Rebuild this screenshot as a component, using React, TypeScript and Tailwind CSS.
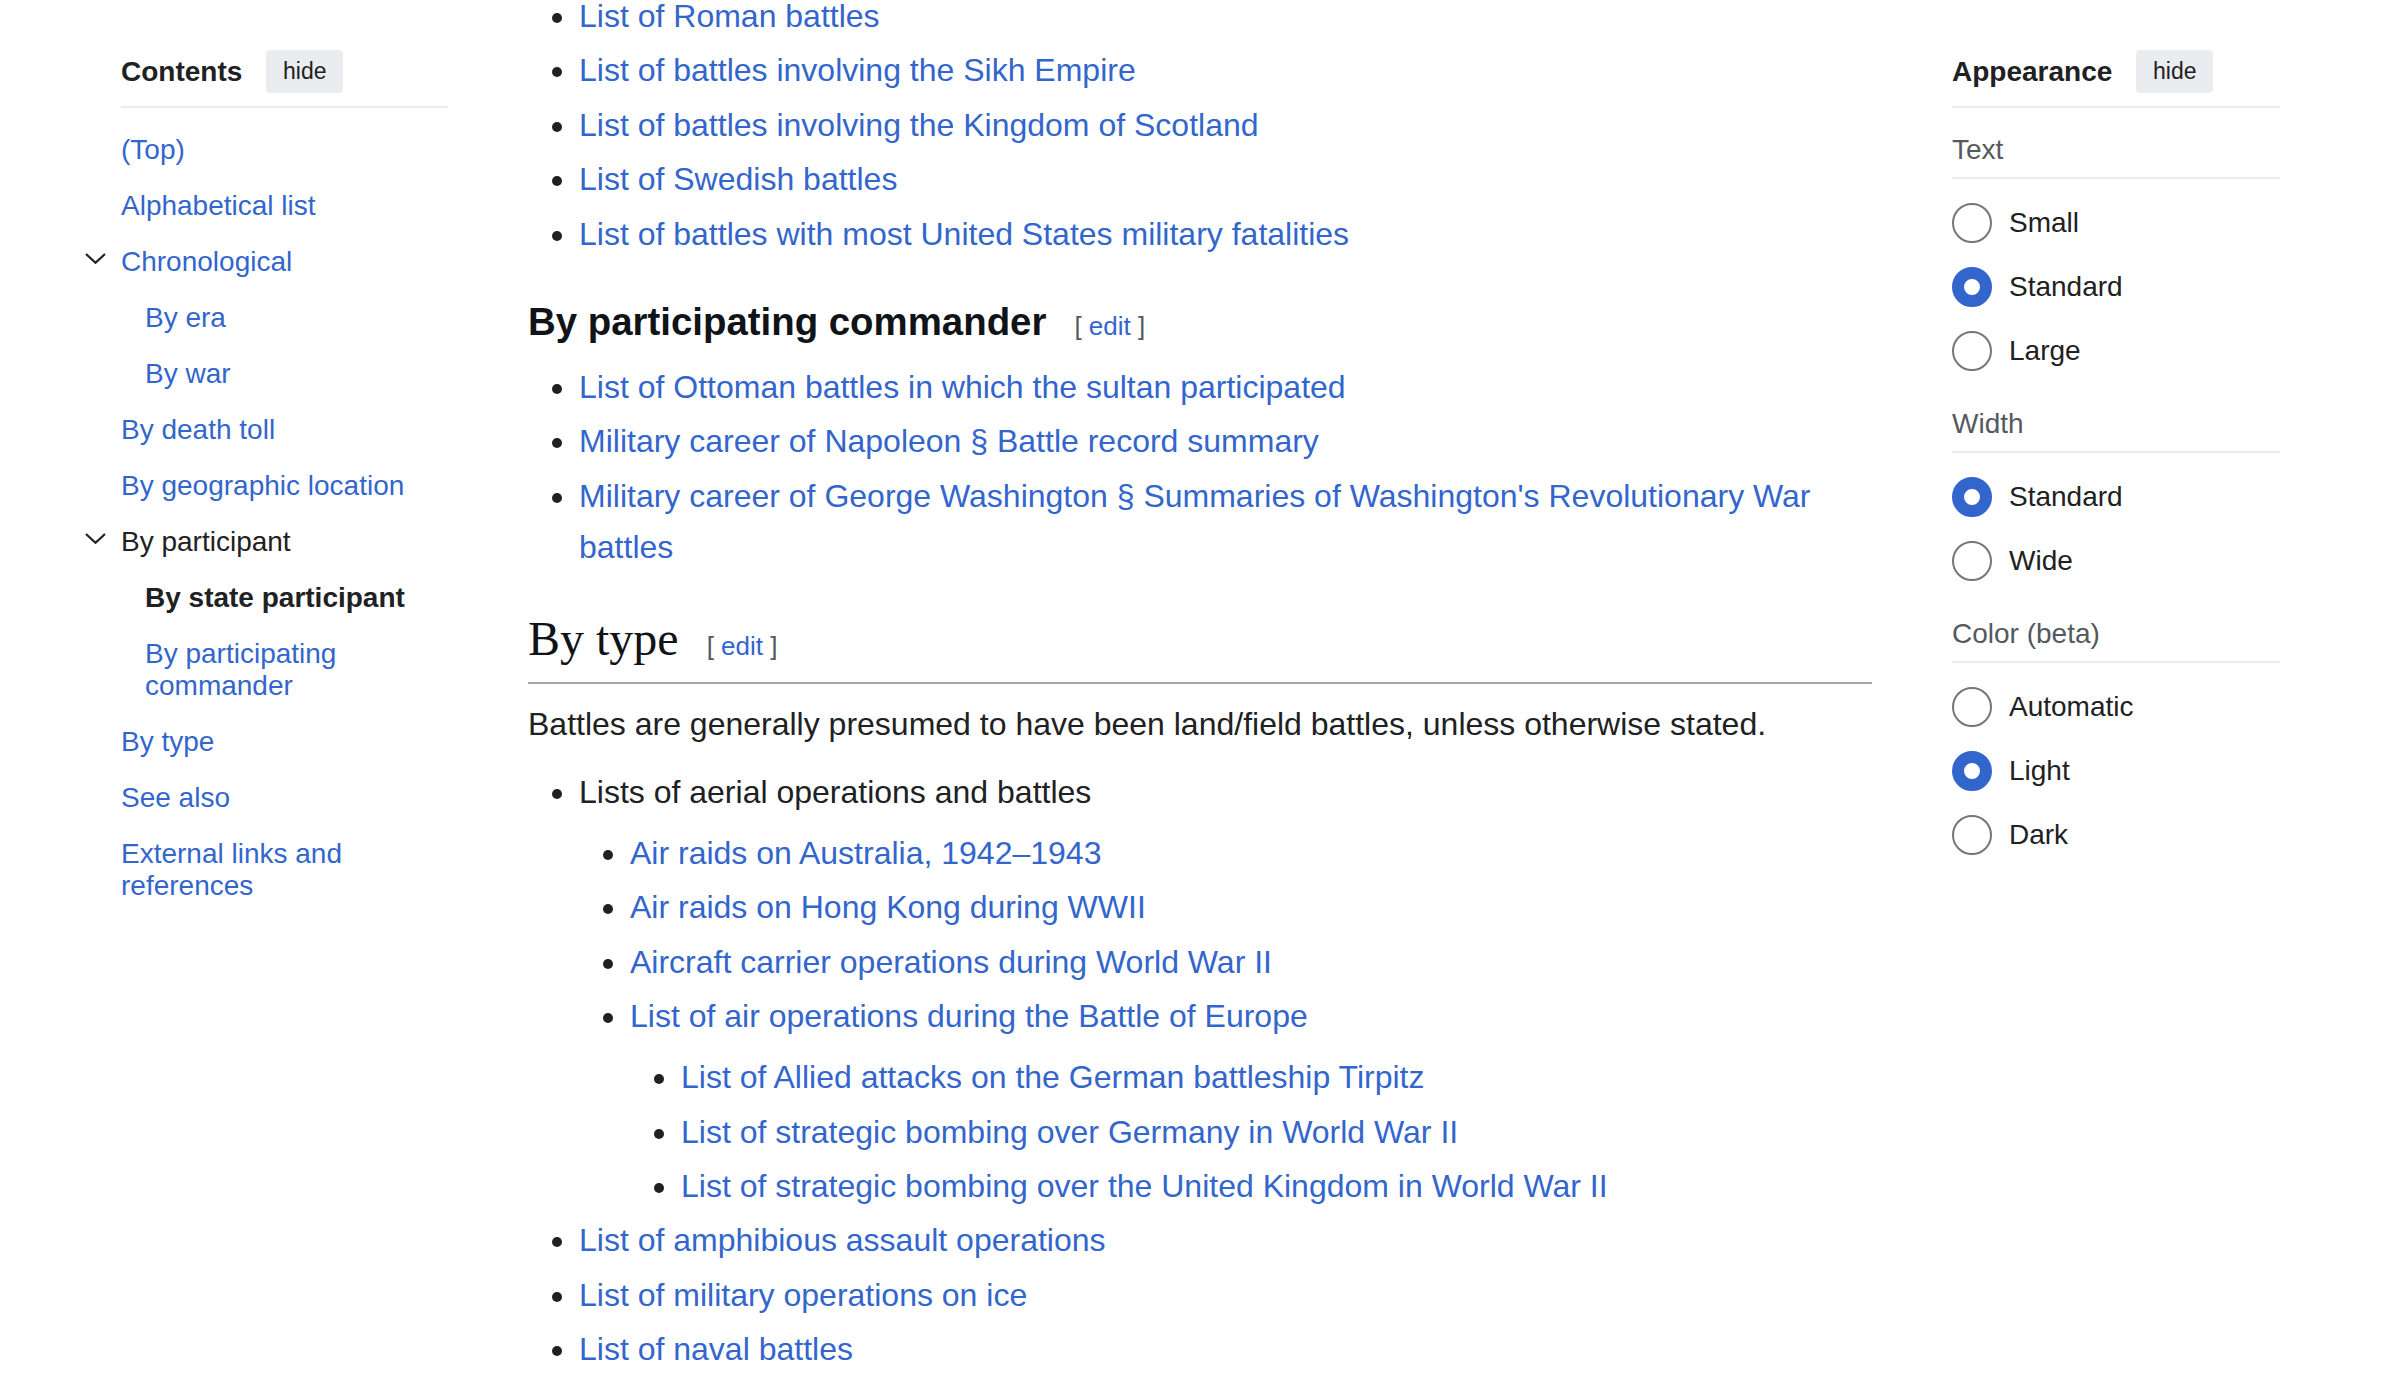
import React from "react";

const Dot = () => (
  <span className="w-[27px] shrink-0 pt-[22px]">
    <span className="block w-[10px] h-[10px] rounded-full bg-[#202122]" />
  </span>
);

function LI({ children, nested }: { children: React.ReactNode; nested?: React.ReactNode }) {
  return (
    <li className="flex -ml-[27px]">
      <Dot />
      <div className="min-w-0 flex-1">
        <div>{children}</div>
        {nested}
      </div>
    </li>
  );
}

function UL({ children, className = "" }: { children: React.ReactNode; className?: string }) {
  return <ul className={"flex flex-col gap-[3.2px] pl-[51px] " + className}>{children}</ul>;
}

const A = ({ children }: { children: React.ReactNode }) => (
  <a className="text-[#3366cc]" href="#">
    {children}
  </a>
);

const Edit = () => (
  <span className="ml-[28px] font-['Liberation_Sans',Arial,sans-serif] text-[26px] leading-none font-normal text-[#54595d]">
    [ <a className="text-[#3366cc]" href="#">edit</a> ]
  </span>
);

function Chevron() {
  return (
    <svg width="21" height="11" viewBox="0 0 21 11" className="mt-[7px]" fill="none">
      <path d="M1 1 L10.5 9.8 L20 1" stroke="#202122" strokeWidth="2.2" />
    </svg>
  );
}

type TocItem = { label: string; level: 1 | 2; link?: boolean; bold?: boolean; chevron?: boolean };

const toc: TocItem[] = [
  { label: "(Top)", level: 1, link: true },
  { label: "Alphabetical list", level: 1, link: true },
  { label: "Chronological", level: 1, link: true, chevron: true },
  { label: "By era", level: 2, link: true },
  { label: "By war", level: 2, link: true },
  { label: "By death toll", level: 1, link: true },
  { label: "By geographic location", level: 1, link: true },
  { label: "By participant", level: 1, link: false, chevron: true },
  { label: "By state participant", level: 2, link: false, bold: true },
  { label: "By participating commander", level: 2, link: true },
  { label: "By type", level: 1, link: true },
  { label: "See also", level: 1, link: true },
  { label: "External links and references", level: 1, link: true },
];

function Radio({ label, checked }: { label: string; checked?: boolean }) {
  return (
    <div className="flex items-center">
      <span
        className={
          checked
            ? "shrink-0 w-[40px] h-[40px] rounded-full border-[12px] border-[#3366cc] bg-white"
            : "shrink-0 w-[40px] h-[40px] rounded-full border-2 border-[#72777d] bg-white"
        }
      />
      <span className="ml-[17px] text-[28px] leading-[32px] text-[#202122]">{label}</span>
    </div>
  );
}

function Section({ title, options, first }: { title: string; options: [string, boolean][]; first?: boolean }) {
  return (
    <div className={first ? "mt-[26px]" : "mt-[37px]"}>
      <div className="text-[28px] leading-[32px] text-[#54595d] pb-[11px] border-b-2 border-[#eaecf0]">{title}</div>
      <div className="mt-[24px] flex flex-col gap-[24px]">
        {options.map(([l, c]) => (
          <Radio key={l} label={l} checked={c} />
        ))}
      </div>
    </div>
  );
}

function PanelHeader({ title }: { title: string }) {
  return (
    <div className="flex items-center gap-[24px] pb-[13px] border-b-2 border-[#eaecf0]">
      <span className="text-[28px] font-bold leading-[32px] text-[#202122]">{title}</span>
      <button className="h-[43px] w-[77px] rounded-[4px] bg-[#eaecf0] text-[23px] text-[#202122]">hide</button>
    </div>
  );
}

export default function App() {
  return (
    <div className="h-[1398px] overflow-hidden bg-white font-['Liberation_Sans',Arial,sans-serif] text-[#202122]">
      <div className="flex items-start gap-[80px] pl-[121px] pr-[120px]">
        {/* Left TOC */}
        <nav className="w-[327px] shrink-0 pt-[50px]">
          <PanelHeader title="Contents" />
          <ul className="mt-[14px]">
            {toc.map((t) => (
              <li
                key={t.label}
                className={
                  "py-[12px] text-[28px] leading-[32px] " +
                  (t.level === 2 ? "pl-[24px] " : "") +
                  (t.chevron ? "flex -ml-[36px]" : "")
                }
              >
                {t.chevron && (
                  <span className="w-[36px] shrink-0 flex items-start">
                    <Chevron />
                  </span>
                )}
                <span
                  className={
                    t.link ? "text-[#3366cc]" : t.bold ? "font-bold text-[#202122]" : "text-[#202122]"
                  }
                >
                  {t.label}
                </span>
              </li>
            ))}
          </ul>
        </nav>

        {/* Main content */}
        <main className="w-[1344px] shrink-0 -mt-[9px] text-[32px] leading-[51.2px] text-[#202122]">
          <UL>
            <LI><A>List of Roman battles</A></LI>
            <LI><A>List of battles involving the Sikh Empire</A></LI>
            <LI><A>List of battles involving the Kingdom of Scotland</A></LI>
            <LI><A>List of Swedish battles</A></LI>
            <LI><A>List of battles with most United States military fatalities</A></LI>
          </UL>

          <h3 className="mt-[38px] text-[38.4px] leading-[48px] font-bold text-[#101418]">
            By participating commander
            <Edit />
          </h3>

          <UL className="mt-[16px]">
            <LI><A>List of Ottoman battles in which the sultan participated</A></LI>
            <LI><A>Military career of Napoleon § Battle record summary</A></LI>
            <LI><A>Military career of George Washington § Summaries of Washington's Revolutionary War battles</A></LI>
          </UL>

          <h2 className="mt-[37px] pb-[14px] border-b-2 border-[#a2a9b1] font-['Liberation_Serif',serif] text-[48px] leading-[58px] font-normal text-[#101418]">
            By type
            <Edit />
          </h2>

          <p className="mt-[15.5px]">
            Battles are generally presumed to have been land/field battles, unless otherwise stated.
          </p>

          <UL className="mt-[16px]">
            <LI
              nested={
                <UL className="mt-[10px]">
                  <LI><A>Air raids on Australia, 1942–1943</A></LI>
                  <LI><A>Air raids on Hong Kong during WWII</A></LI>
                  <LI><A>Aircraft carrier operations during World War II</A></LI>
                  <LI
                    nested={
                      <UL className="mt-[10px]">
                        <LI><A>List of Allied attacks on the German battleship Tirpitz</A></LI>
                        <LI><A>List of strategic bombing over Germany in World War II</A></LI>
                        <LI><A>List of strategic bombing over the United Kingdom in World War II</A></LI>
                      </UL>
                    }
                  >
                    <A>List of air operations during the Battle of Europe</A>
                  </LI>
                </UL>
              }
            >
              Lists of aerial operations and battles
            </LI>
            <LI><A>List of amphibious assault operations</A></LI>
            <LI><A>List of military operations on ice</A></LI>
            <LI><A>List of naval battles</A></LI>
          </UL>
        </main>

        {/* Right appearance panel */}
        <aside className="w-[328px] shrink-0 pt-[50px]">
          <PanelHeader title="Appearance" />
          <Section
            first
            title="Text"
            options={[
              ["Small", false],
              ["Standard", true],
              ["Large", false],
            ]}
          />
          <Section
            title="Width"
            options={[
              ["Standard", true],
              ["Wide", false],
            ]}
          />
          <Section
            title="Color (beta)"
            options={[
              ["Automatic", false],
              ["Light", true],
              ["Dark", false],
            ]}
          />
        </aside>
      </div>
    </div>
  );
}
